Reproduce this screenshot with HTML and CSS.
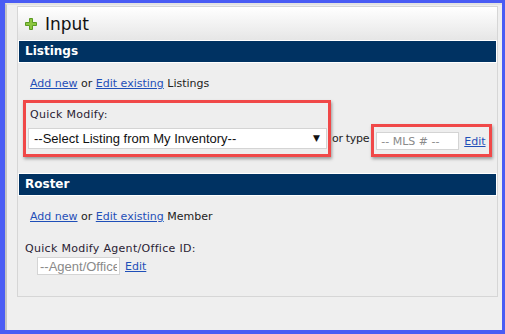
FILE: index.html
```html
<!DOCTYPE html>
<html lang="en">
<head>
  <meta charset="UTF-8" />
  <title>Input</title>
  <link rel="stylesheet" href="styles.css">
</head>
<body>
  <div class="frame">
    <div class="panel">
      <div class="panel-head">
        <svg class="plus" width="12" height="12" viewBox="0 0 12 12">
          <path d="M4.5 0.5h3v4h4v3h-4v4h-3v-4h-4v-3h4z" fill="#8cc63f" stroke="#5a9a22" stroke-width="1"/>
        </svg>
        <span class="title">Input</span>
      </div>

      <div class="bar">Listings</div>
      <div class="section">
        <p class="links"><a href="#">Add new</a> or <a href="#">Edit existing</a> Listings</p>
        <div class="quick-row">
          <div class="mark mark-select">
            <label class="label" for="listing">Quick Modify:</label>
            <div class="select-wrap">
              <select id="listing">
                <option>--Select Listing from My Inventory--</option>
              </select>
            </div>
          </div>
          <span class="or-type">or type</span>
          <div class="mark mark-mls">
            <input type="text" class="mls" placeholder="-- MLS # --" />
            <a href="#">Edit</a>
          </div>
        </div>
      </div>

      <div class="bar">Roster</div>
      <div class="section">
        <p class="links"><a href="#">Add new</a> or <a href="#">Edit existing</a> Member</p>
        <p class="label agent-label">Quick Modify Agent/Office ID:</p>
        <div class="agent-row">
          <input type="text" class="agent" placeholder="--Agent/Office ID--" />
          <a href="#">Edit</a>
        </div>
      </div>
    </div>
  </div>
</body>
</html>
```

FILE: styles.css
```css
html, body { margin: 0; height: 100%; }
body { background: #4a5cf4; padding: 3px 3px 4px 5px; box-sizing: border-box; font-family: "DejaVu Sans", Verdana, sans-serif; font-size: 11px; color: #222; }
a { color: #1f4fb8; }

.frame { height: 100%; box-sizing: border-box; background: #efefef; border-top: 2px solid #e2e2e2; border-left: 2px solid #c4c4c4; padding: 1px 4px 0 10px; }
.panel { border: 1px solid #d6d6d6; background: #eeeeee; height: 291px; box-sizing: border-box; }

.panel-head { height: 33px; display: flex; align-items: center; padding-left: 7px; background: linear-gradient(#ffffff, #e6e6e6); }
.plus { margin-right: 8px; margin-top: 1px; }
.title { font-size: 17px; color: #111; }

.bar { background: #003262; color: #fff; font-weight: bold; font-size: 12px; height: 21px; line-height: 21px; padding-left: 6px; border: 1px solid #fff; }

.section { padding: 0 0 16px 5px; }
.links { margin: 14px 0 0 7px; line-height: 13px; }

.quick-row { display: flex; align-items: flex-end; margin-top: 10px; }
.mark { border: 3px solid #f04848; box-shadow: 1px 2px 3px rgba(0,0,0,0.35); }
.mark-select { padding: 5px 1px 5px 2px; }
.label { display: block; margin: 0 0 0 2px; color: #2a2233; letter-spacing: 0.3px; line-height: 14px; }
.select-wrap { position: relative; margin-top: 6px; height: 21px; }
.select-wrap::after { content: "\25BC"; position: absolute; right: 7px; top: 5px; font-size: 9px; color: #111; pointer-events: none; }
select { appearance: none; -webkit-appearance: none; display: block; width: 299px; height: 21px; border: 1px solid #d4d4d4; background: #fff; font-family: "Liberation Sans", Arial, sans-serif; font-size: 13px; color: #111; padding: 0 0 0 5px; margin: 0; border-radius: 0; }

.or-type { margin: 0 2px 12px 1px; letter-spacing: -0.3px; }
.mark-mls { padding: 5px 3px 4px 2px; display: flex; align-items: center; }
.mls { width: 83px; height: 18px; box-sizing: border-box; border: 1px solid #d4d4d4; font-family: "DejaVu Sans", Verdana, sans-serif; font-size: 11px; padding: 0 4px; margin: 0 5px 0 0; }
.mls::placeholder, .agent::placeholder { color: #8a8a8a; }

.agent-label { margin-top: 19px; }
.agent-row { display: flex; align-items: center; margin: 1px 0 0 14px; }
.agent { width: 83px; height: 18px; box-sizing: border-box; border: 1px solid #d4d4d4; font-family: "Liberation Sans", Arial, sans-serif; font-size: 13px; padding: 0 2px; margin: 0 5px 0 0; }
```
